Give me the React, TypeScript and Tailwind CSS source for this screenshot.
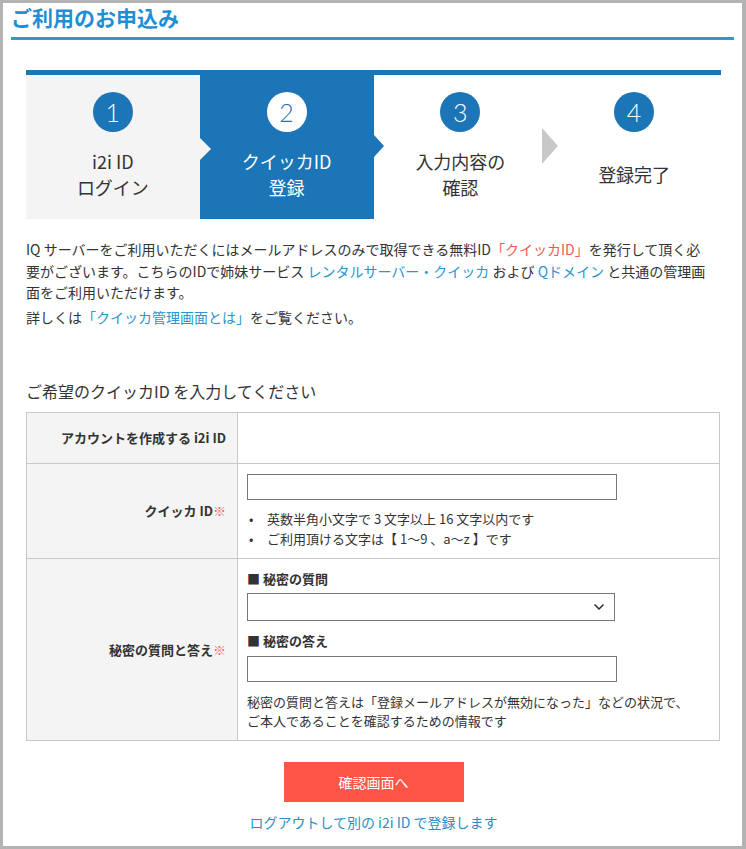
import { ChevronDown } from 'lucide-react';

const steps = [
  { no: 1, lines: ['i2i ID', 'ログイン'], state: 'done' },
  { no: 2, lines: ['クイッカID', '登録'], state: 'active' },
  { no: 3, lines: ['入力内容の', '確認'], state: 'todo' },
  { no: 4, lines: ['登録完了'], state: 'todo' },
];

function StepBar() {
  return (
    <div className="mt-[30px] border-t-[5px] border-[#1b75b6] grid grid-cols-4 h-[149px]">
      {steps.map((s) => {
        const active = s.state === 'active';
        const done = s.state === 'done';
        return (
          <div
            key={s.no}
            className={`relative flex flex-col items-center pt-[17px] ${
              active ? 'bg-[#1b75b6] text-white' : done ? 'bg-[#f4f4f4] text-[#333]' : 'bg-white text-[#333]'
            }`}
          >
            <div
              className={`w-10 h-10 rounded-full flex items-center justify-center font-['Lato','Noto_Sans',sans-serif] font-light text-[25px] leading-none ${
                active ? 'bg-white text-[#1b75b6]' : 'bg-[#1b75b6] text-white'
              }`}
            >
              {s.no}
            </div>
            <div className="flex-1 flex flex-col items-center justify-center pb-[4px] text-[18px] leading-[26px]">
              {s.lines.map((l) => (
                <span key={l}>{l}</span>
              ))}
            </div>
            {done && (
              <span className="absolute left-full top-[63px] z-10 w-0 h-0 border-y-[11px] border-y-transparent border-l-[11px] border-l-[#f4f4f4]" />
            )}
            {active && (
              <span className="absolute left-full top-[60px] z-10 w-0 h-0 border-y-[11px] border-y-transparent border-l-[10px] border-l-[#1b75b6]" />
            )}
            {s.no === 3 && (
              <span className="absolute left-[168px] top-[53px] z-10 w-0 h-0 border-y-[18px] border-y-transparent border-l-[16px] border-l-[#c8c8c8]" />
            )}
          </div>
        );
      })}
    </div>
  );
}

function Label({ children, req, className = '' }: { children: React.ReactNode; req?: boolean; className?: string }) {
  return (
    <div
      className={`bg-[#f4f4f4] border-r border-b border-[#c8c8c8] flex items-center justify-end pr-[11px] text-[13px] font-bold text-[#333] ${className}`}
    >
      {children}
      {req && <span className="text-[#f06a6a] font-normal">※</span>}
    </div>
  );
}

export default function App() {
  return (
    <div className="w-[746px] h-[849px] bg-white border-[#b3b3b3] border-t-[3px] border-l-[3px] border-r-[4px] border-b-[3px] font-['Noto_Sans_CJK_JP','Noto_Sans',sans-serif] text-[#333] overflow-hidden">
      <div className="px-2">
        <h1 className="text-[21px] font-bold leading-[28px] text-[#1e8fd5] pb-[6px] border-b-[3px] border-[#3399cc]">
          ご利用のお申込み
        </h1>
      </div>

      <div className="ml-[23px] mr-[21px]">
        <StepBar />

        <div className="mt-5 text-[14px] leading-[21.5px]">
          <p>
            IQ サーバーをご利用いただくにはメールアドレスのみで取得できる無料ID
            <span className="text-[#ee5a50]">「クイッカID」</span>を発行して頂く必
            <br />
            要がございます。こちらのIDで姉妹サービス <span className="text-[#2a95cf]">レンタルサーバー・クイッカ</span> および{' '}
            <span className="text-[#2a95cf]">Qドメイン</span> と共通の管理画
            <br />
            面をご利用いただけます。
          </p>
          <p className="mt-[3px]">
            詳しくは<span className="text-[#2a95cf]">「クイッカ管理画面とは」</span>をご覧ください。
          </p>
        </div>

        <h2 className="mt-[51px] text-[16px] leading-[24px] text-[#333]">ご希望のクイッカID を入力してください</h2>

        <div className="mt-[9px] mr-[1px] grid grid-cols-[211px_1fr] border-t border-l border-[#c8c8c8]">
          <Label className="h-[51px]">アカウントを作成する i2i ID</Label>
          <div className="h-[51px] border-r border-b border-[#c8c8c8]" />

          <Label req>クイッカ ID</Label>
          <div className="border-r border-b border-[#c8c8c8] pt-[10px] pb-[9px] pl-[9px] text-[13px]">
            <input className="block w-[370px] h-[26px] border border-[#777] outline-none" />
            <ul className="mt-[9px] leading-[20px]">
              <li className="flex">
                <span className="w-[20px] pl-[2px]">•</span>英数半角小文字で 3 文字以上 16 文字以内です
              </li>
              <li className="flex">
                <span className="w-[20px] pl-[2px]">•</span>ご利用頂ける文字は【 1～9 、a～z 】です
              </li>
            </ul>
          </div>

          <Label req>秘密の質問と答え</Label>
          <div className="border-r border-b border-[#c8c8c8] pt-[10px] pb-[10px] pl-[9px] text-[13px]">
            <div className="font-bold leading-[20px]">■ 秘密の質問</div>
            <div className="relative mt-[4px] w-[368px]">
              <select className="block w-full h-[28px] border border-[#777] appearance-none bg-white outline-none" />
              <ChevronDown
                size={16}
                strokeWidth={2.5}
                className="absolute right-[8px] top-[6px] text-[#333] pointer-events-none"
              />
            </div>
            <div className="mt-[10px] font-bold leading-[20px]">■ 秘密の答え</div>
            <input className="block mt-[5px] w-[370px] h-[26px] border border-[#777] outline-none" />
            <p className="mt-[10px] leading-[19px]">
              秘密の質問と答えは「登録メールアドレスが無効になった」などの状況で、
              <br />
              ご本人であることを確認するための情報です
            </p>
          </div>
        </div>

        <div className="flex flex-col items-center">
          <button className="mt-[21px] w-[180px] h-[40px] bg-[#ff5549] text-white text-[14px]">確認画面へ</button>
          <a className="mt-[10px] text-[14px] leading-[20px] text-[#2a90c4]">ログアウトして別の i2i ID で登録します</a>
        </div>
      </div>
    </div>
  );
}
